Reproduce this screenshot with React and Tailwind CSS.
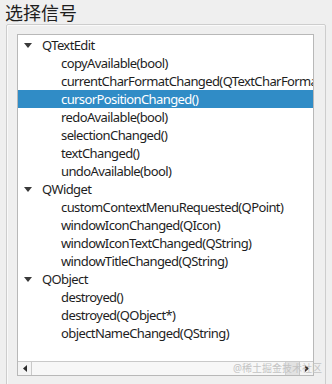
const GROUPS = [
  {
    name: 'QTextEdit',
    signals: [
      'copyAvailable(bool)',
      'currentCharFormatChanged(QTextCharFormat)',
      'cursorPositionChanged()',
      'redoAvailable(bool)',
      'selectionChanged()',
      'textChanged()',
      'undoAvailable(bool)',
    ],
  },
  {
    name: 'QWidget',
    signals: [
      'customContextMenuRequested(QPoint)',
      'windowIconChanged(QIcon)',
      'windowIconTextChanged(QString)',
      'windowTitleChanged(QString)',
    ],
  },
  {
    name: 'QObject',
    signals: ['destroyed()', 'destroyed(QObject*)', 'objectNameChanged(QString)'],
  },
]

const SELECTED = 'cursorPositionChanged()'

function ExpandArrow() {
  return (
    <svg width="8" height="5" viewBox="0 0 8 5" className="shrink-0">
      <path d="M0 0 L8 0 L4 5 Z" fill="#3a3a3a" />
    </svg>
  )
}

function TreeRow({ label, isParent, isSelected }) {
  return (
    <div
      className={`flex h-[18px] items-center whitespace-nowrap ${
        isSelected ? 'bg-[#308cc6] text-white' : 'text-[#1e1e1e]'
      }`}
    >
      {isParent ? (
        <>
          <div className="pl-[6px]">
            <ExpandArrow />
          </div>
          <span className="pl-[10px]">{label}</span>
        </>
      ) : (
        <span className="pl-[43px]">{label}</span>
      )}
    </div>
  )
}

function ScrollBar() {
  return (
    <div className="flex h-[14px] border-t border-[#c9c9c9] bg-[#f4f4f4]">
      <div className="flex w-[14px] items-center justify-center border-r border-[#c9c9c9]">
        <svg width="4" height="7" viewBox="0 0 4 7">
          <path d="M4 0 L4 7 L0 3.5 Z" fill="#2a2a2a" />
        </svg>
      </div>
      <div className="flex flex-1">
        <div className="flex-1 border-r border-[#d2d2d2] bg-[#f7f7f7]" />
        <div className="w-[13px] bg-[#e2e2e2]" />
      </div>
      <div className="flex w-[14px] items-center justify-center border-l border-[#c9c9c9]">
        <svg width="4" height="7" viewBox="0 0 4 7">
          <path d="M0 0 L0 7 L4 3.5 Z" fill="#2a2a2a" />
        </svg>
      </div>
    </div>
  )
}

export default function App() {
  return (
    <div className="h-[384px] w-[332px] overflow-hidden bg-[#efefef] font-['Noto_Sans','Noto_Sans_CJK_SC',sans-serif]">
      <p className="h-[24px] pl-[5px] pt-[3px] text-[18px] leading-[20px] text-[#1e1e1e]">
        选择信号
      </p>
      <div className="ml-[6px] h-[380px] w-[320px] rounded-[2px] border border-[#cdcdcd] px-[10px] pt-[9px] shadow-[inset_1px_1px_0_#fafafa]">
        <div className="relative flex h-[342px] w-[297px] flex-col border border-[#b8b8b8] bg-white">
          <div className="flex-1 overflow-hidden pt-[1px] text-[13px] leading-[18px] tracking-[-0.6px]">
            {GROUPS.map((group) => (
              <div key={group.name}>
                <TreeRow label={group.name} isParent />
                {group.signals.map((signal) => (
                  <TreeRow
                    key={signal}
                    label={signal}
                    isSelected={signal === SELECTED}
                  />
                ))}
              </div>
            ))}
          </div>
          <ScrollBar />
          <span className="absolute bottom-[1px] right-[-9px] text-[10px] leading-[12px] text-[#c4c4c4]">
            @稀土掘金技术社区
          </span>
        </div>
      </div>
    </div>
  )
}
